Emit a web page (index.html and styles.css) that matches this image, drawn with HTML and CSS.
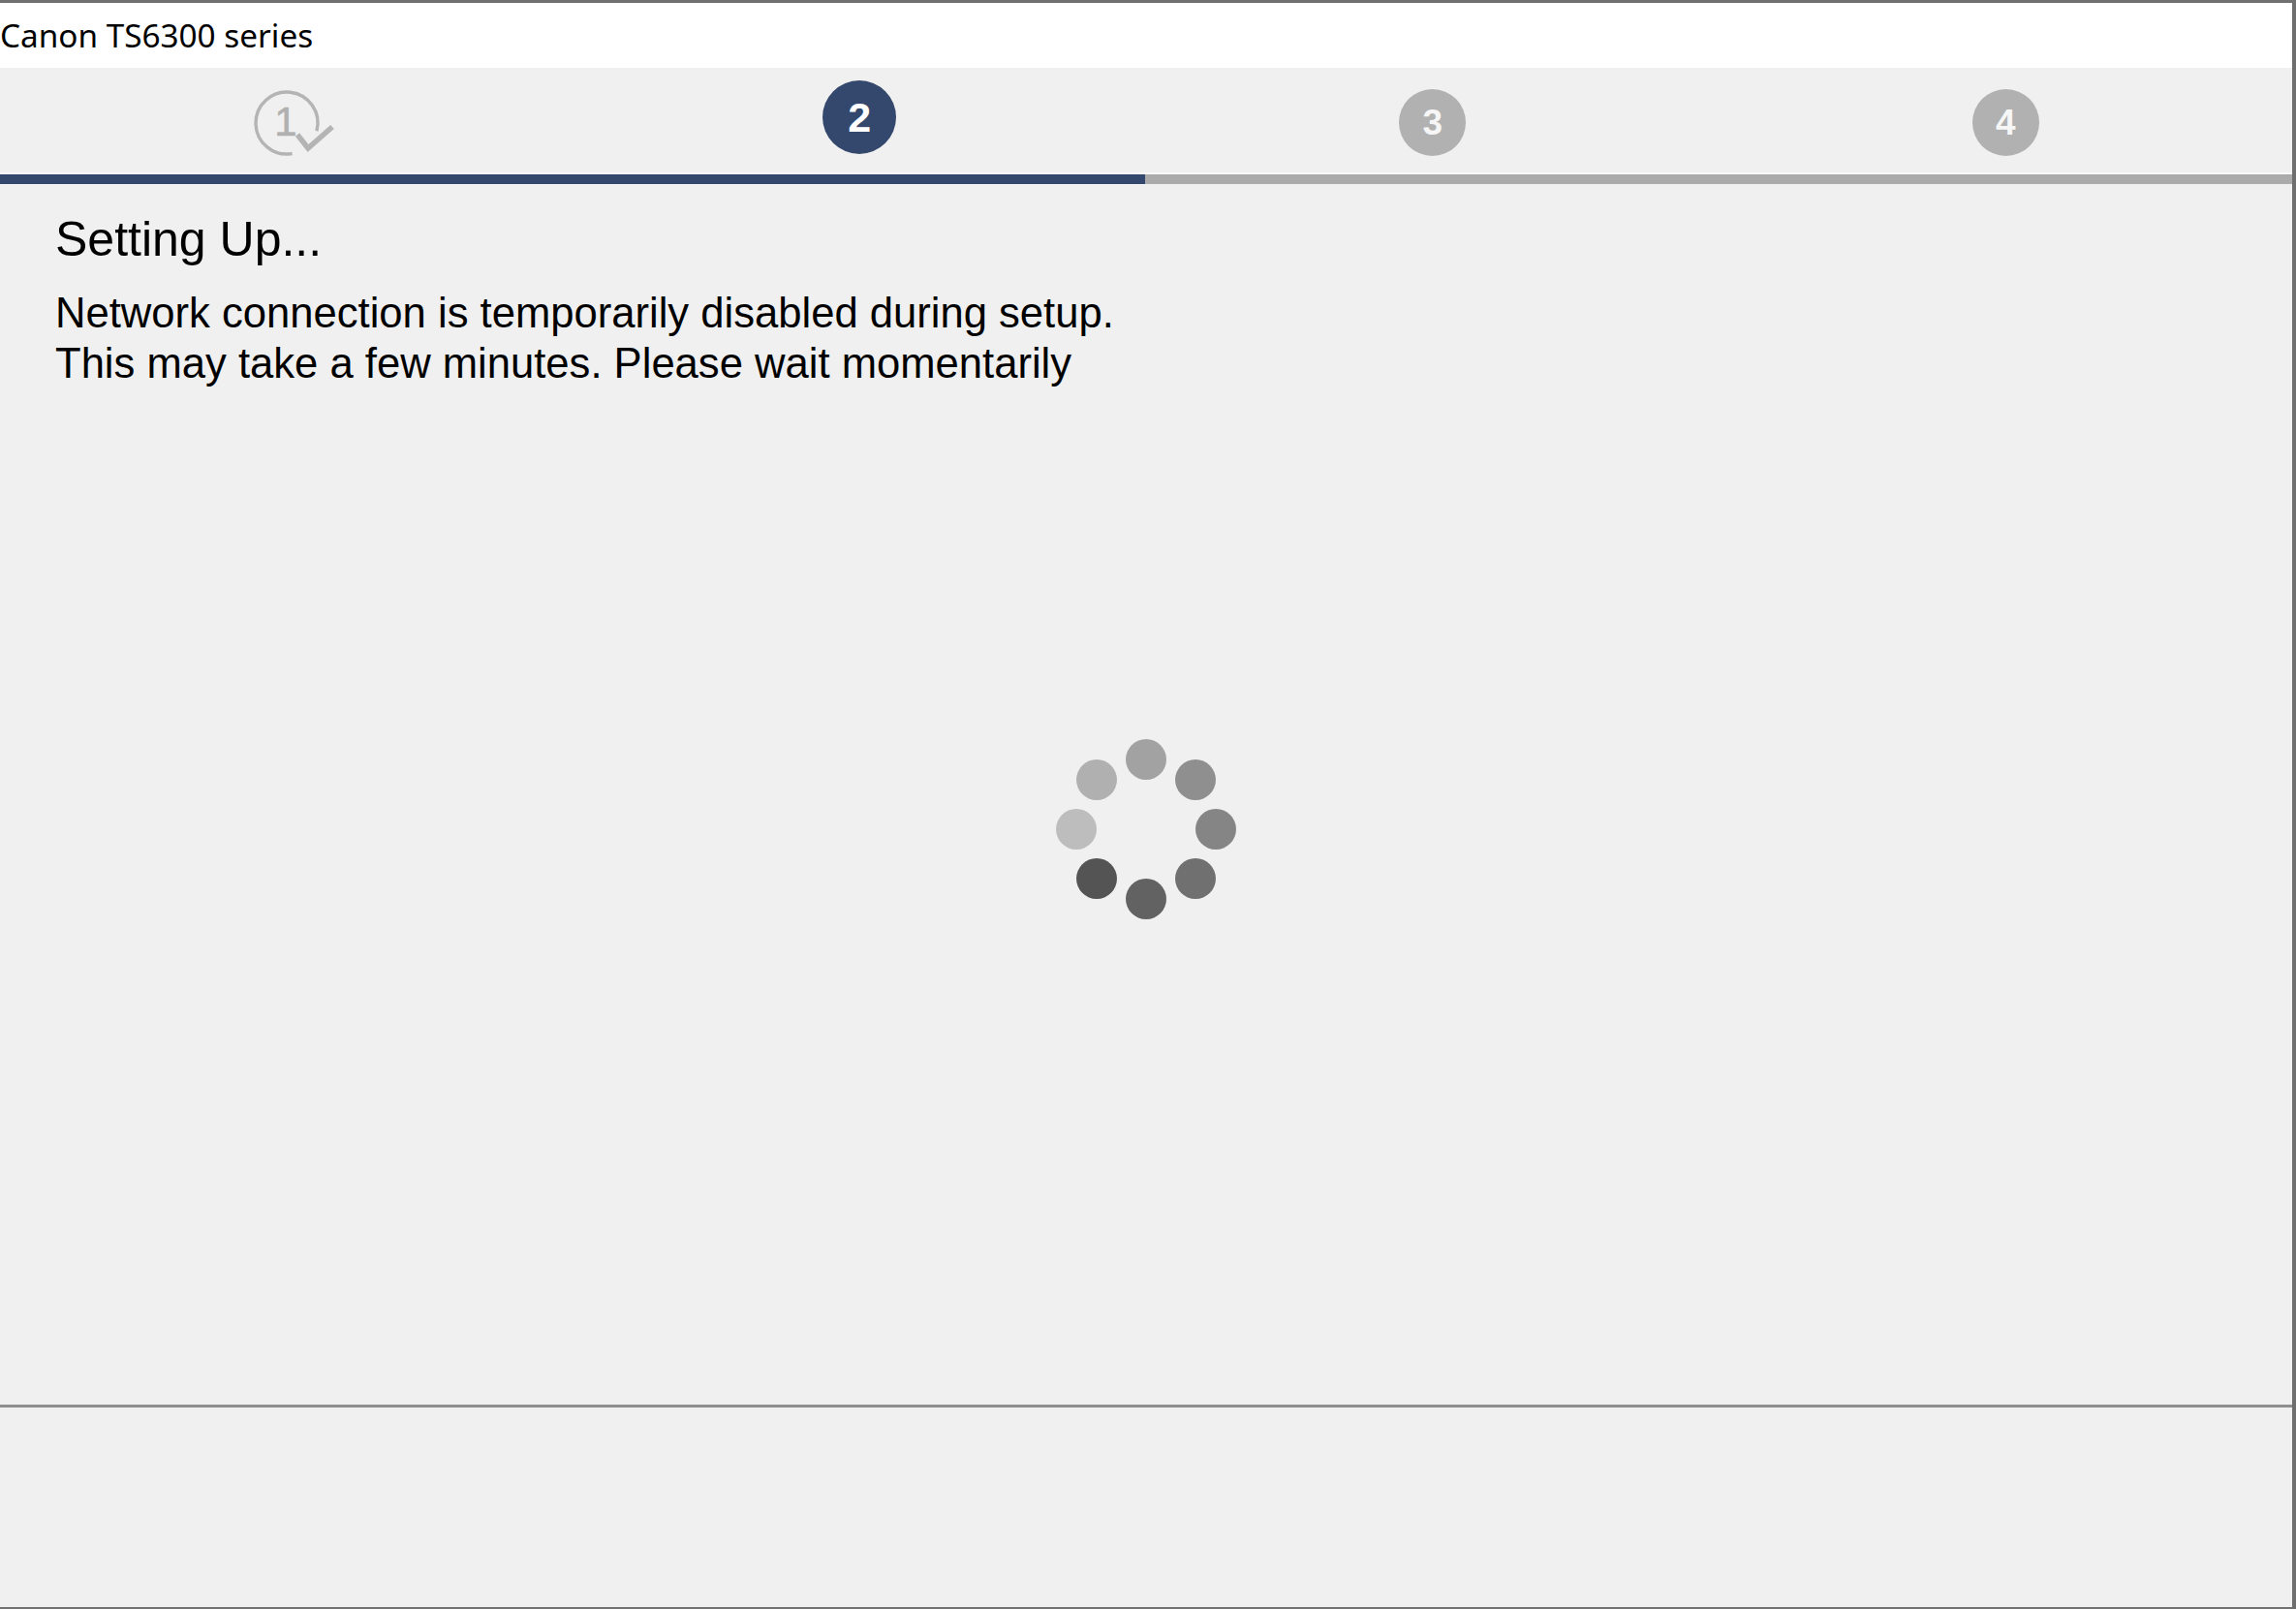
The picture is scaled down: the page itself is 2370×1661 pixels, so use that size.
FILE: index.html
```html
<!DOCTYPE html>
<html lang="en">
<head>
<meta charset="utf-8">
<title>Canon TS6300 series</title>
<link rel="stylesheet" href="styles.css">
</head>
<body>
<div class="window">
  <div class="titlebar">Canon TS6300 series</div>
  <div class="steps">
    <div class="step step-done">
      <svg class="done-icon" width="70" height="70" viewBox="0 0 70 70">
        <path d="M40.56 66.51 A32 32 0 1 1 65.91 43.28" fill="none" stroke="#b4b4b4" stroke-width="3.4"/>
        <text x="34" y="48" text-anchor="middle" class="done-num">1</text>
        <path d="M46 47 L57 61 L82 39" fill="none" stroke="#b4b4b4" stroke-width="5.5" stroke-linejoin="miter"/>
      </svg>
    </div>
    <div class="step"><span class="badge badge-active">2</span></div>
    <div class="step"><span class="badge badge-todo">3</span></div>
    <div class="step"><span class="badge badge-todo">4</span></div>
  </div>
  <div class="progress"><div class="progress-fill"></div></div>
  <main class="content">
    <h1 class="heading">Setting Up...</h1>
    <p class="message">Network connection is temporarily disabled during setup.<br>This may take a few minutes. Please wait momentarily</p>
    <div class="spinner">
      <span class="dot d1"></span>
      <span class="dot d2"></span>
      <span class="dot d3"></span>
      <span class="dot d4"></span>
      <span class="dot d5"></span>
      <span class="dot d6"></span>
      <span class="dot d7"></span>
      <span class="dot d8"></span>
    </div>
  </main>
  <footer class="footer"></footer>
</div>
</body>
</html>
```

FILE: styles.css
```css
* { box-sizing: border-box; }
html, body { margin: 0; padding: 0; }
body { background: #f0f0f0; }

.window {
  width: 2370px;
  height: 1661px;
  border-top: 3px solid #707070;
  border-right: 4px solid #6e6e6e;
  border-bottom: 2px solid #707070;
  background: #f0f0f0;
  display: flex;
  flex-direction: column;
  overflow: hidden;
}

.titlebar {
  height: 67px;
  flex: none;
  background: #ffffff;
  font-family: "Noto Sans", "Open Sans", sans-serif;
  font-size: 33.3px;
  line-height: 67px;
  color: #000;
}

.steps {
  height: 108px;
  flex: none;
  display: grid;
  grid-template-columns: repeat(4, 1fr);
  align-items: start;
}

.step {
  display: flex;
  justify-content: center;
  padding-top: 22px;
}

.done-icon { overflow: visible; display: block; }
.done-num {
  font-family: "Liberation Sans", Arial, sans-serif;
  font-size: 42px;
  fill: #b0b0b0;
  stroke: #b0b0b0;
  stroke-width: 0.6px;
}

.badge {
  display: flex;
  align-items: center;
  justify-content: center;
  border-radius: 50%;
  font-family: "Liberation Sans", Arial, sans-serif;
  font-weight: bold;
  color: #f6f6f6;
}
.badge-active {
  width: 76px;
  height: 76px;
  margin-top: -9px;
  background: #34486d;
  font-size: 43px;
  color: #ffffff;
}
.badge-todo {
  width: 69px;
  height: 69px;
  background: #b1b1b1;
  font-size: 37px;
}

.progress {
  flex: none;
  height: 12px;
  border-top: 2px solid #f8f8f8;
  background: #ababab;
}
.progress-fill {
  width: 1182px;
  height: 100%;
  background: #34486d;
}

.content {
  flex: none;
  height: 1260px;
  padding: 28px 57px 0 57px;
  font-family: "Liberation Sans", Arial, sans-serif;
  color: #000;
}

.heading {
  margin: 0;
  font-size: 50px;
  line-height: 58px;
  font-weight: normal;
}

.message {
  margin: 21px 0 0 0;
  font-size: 43.6px;
  line-height: 52px;
}

.spinner {
  position: relative;
  width: 186px;
  height: 186px;
  margin: 362px auto 0 auto;
}
.dot {
  position: absolute;
  width: 42px;
  height: 42px;
  border-radius: 50%;
}
.d1 { left: 72px;  top: 0;     background: #a2a2a2; }
.d2 { left: 123px; top: 21px;  background: #8f8f8f; }
.d3 { left: 144px; top: 72px;  background: #858585; }
.d4 { left: 123px; top: 123px; background: #707070; }
.d5 { left: 72px;  top: 144px; background: #626262; }
.d6 { left: 21px;  top: 123px; background: #545454; }
.d7 { left: 0;     top: 72px;  background: #bdbdbd; }
.d8 { left: 21px;  top: 21px;  background: #b0b0b0; }

.footer {
  flex: 1;
  border-top: 3px solid #8e8e8e;
  background: #f0f0f0;
}
```
